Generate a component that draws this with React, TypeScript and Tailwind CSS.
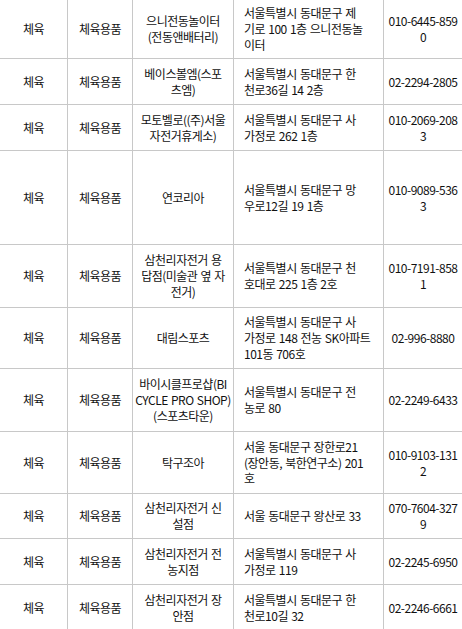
import React from "react";

type Row = {
  h: string;
  name: string[];
  addr: string[];
  phone: string[];
};

const rows: Row[] = [
  { h: "h-[59px]", name: ["으니전동놀이터", "(전동앤배터리)"], addr: ["서울특별시 동대문구 제", "기로 100 1층 으니전동놀", "이터"], phone: ["010-6445-859", "0"] },
  { h: "h-[46px]", name: ["베이스볼엠(스포", "츠엠)"], addr: ["서울특별시 동대문구 한", "천로36길 14 2층"], phone: ["02-2294-2805"] },
  { h: "h-[46px]", name: ["모토벨로((주)서울", "자전거휴게소)"], addr: ["서울특별시 동대문구 사", "가정로 262 1층"], phone: ["010-2069-208", "3"] },
  { h: "h-[94px]", name: ["연코리아"], addr: ["서울특별시 동대문구 망", "우로12길 19 1층"], phone: ["010-9089-536", "3"] },
  { h: "h-[63px]", name: ["삼천리자전거 용", "답점(미술관 옆 자", "전거)"], addr: ["서울특별시 동대문구 천", "호대로 225 1층 2호"], phone: ["010-7191-858", "1"] },
  { h: "h-[61px]", name: ["대림스포츠"], addr: ["서울특별시 동대문구 사", "가정로 148 전농 SK아파트", "101동 706호"], phone: ["02-996-8880"] },
  { h: "h-[63px]", name: ["바이시클프로샵(BI", "CYCLE PRO SHOP)", "(스포츠타운)"], addr: ["서울특별시 동대문구 전", "농로 80"], phone: ["02-2249-6433"] },
  { h: "h-[62px]", name: ["탁구조아"], addr: ["서울 동대문구 장한로21", "(장안동, 북한연구소) 201", "호"], phone: ["010-9103-131", "2"] },
  { h: "h-[45px]", name: ["삼천리자전거 신", "설점"], addr: ["서울 동대문구 왕산로 33"], phone: ["070-7604-327", "9"] },
  { h: "h-[46px]", name: ["삼천리자전거 전", "농지점"], addr: ["서울특별시 동대문구 사", "가정로 119"], phone: ["02-2245-6950"] },
  { h: "h-[46px]", name: ["삼천리자전거 장", "안점"], addr: ["서울특별시 동대문구 한", "천로10길 32"], phone: ["02-2246-6661"] },
];

function Lines({ lines }: { lines: string[] }) {
  return (
    <div className="flex flex-col whitespace-nowrap">
      {lines.map((l, i) => (
        <span key={i}>{l}</span>
      ))}
    </div>
  );
}

export default function App() {
  return (
    <div className="w-[462px] h-[629px] overflow-hidden bg-white text-[#111] text-[12px] leading-[15.8px] tracking-[-0.5px] [word-spacing:1px] font-['Noto_Sans_CJK_KR',sans-serif]">
      {rows.map((r, i) => (
        <div key={i} className={`flex border-b border-[#c8c8c8] ${r.h}`}>
          <div className="w-[68px] shrink-0 border-r border-[#c8c8c8] flex items-center justify-center text-center">
            체육
          </div>
          <div className="w-[65px] shrink-0 border-r border-[#c8c8c8] flex items-center justify-center text-center">
            체육용품
          </div>
          <div className="w-[101px] shrink-0 border-r border-[#c8c8c8] flex items-center justify-center text-center">
            <Lines lines={r.name} />
          </div>
          <div className="w-[150px] shrink-0 border-r border-[#c8c8c8] flex items-center pl-[10px] text-left">
            <Lines lines={r.addr} />
          </div>
          <div className="w-[78px] shrink-0 flex items-center justify-center text-center">
            <Lines lines={r.phone} />
          </div>
        </div>
      ))}
    </div>
  );
}
